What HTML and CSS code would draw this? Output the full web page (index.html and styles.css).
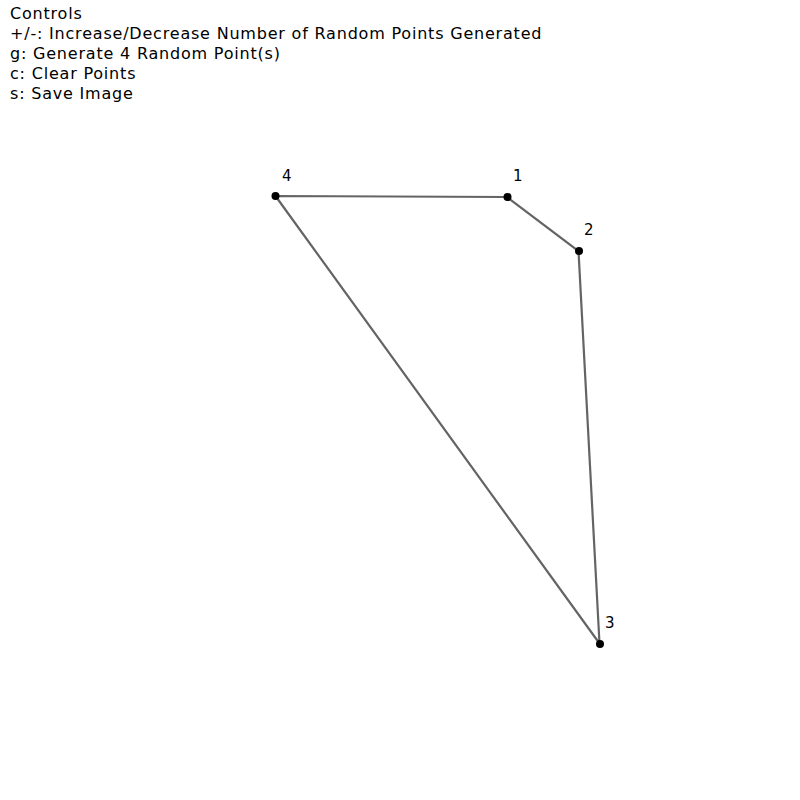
FILE: index.html
```html
<!DOCTYPE html>
<html lang="en">
<head>
    <meta charset="UTF-8">
    <title>Random Points</title>
    <link rel="stylesheet" href="styles.css">
</head>
<body>
    <div class="stage">
        <!-- Drawing surface: polygon through the generated points -->
        <svg class="canvas" width="800" height="800" viewBox="0 0 800 800">
            <polygon class="edges" points="507,197 578.5,251 599.5,643.5 275.5,196"/>
            <g class="dots">
                <circle cx="507.5" cy="197" r="4"/>
                <circle cx="579" cy="251" r="4"/>
                <circle cx="600" cy="644" r="4"/>
                <circle cx="275.5" cy="196" r="4"/>
            </g>
            <g class="labels">
                <text x="513" y="181">1</text>
                <text x="584" y="235">2</text>
                <text x="605" y="628">3</text>
                <text x="282" y="181">4</text>
            </g>
        </svg>

        <div class="controls">
            <div>Controls</div>
            <div>+/-: Increase/Decrease Number of Random Points Generated</div>
            <div>g: Generate 4 Random Point(s)</div>
            <div>c: Clear Points</div>
            <div>s: Save Image</div>
        </div>
    </div>
</body>
</html>
```

FILE: styles.css
```css
body {
    margin: 0;
    background: #ffffff;
    font-family: 'DejaVu Sans', 'Liberation Sans', sans-serif;
    color: #000000;
}
.stage {
    position: relative;
    width: 800px;
    height: 800px;
    overflow: hidden;
}
.canvas {
    position: absolute;
    top: 0;
    left: 0;
}
.controls {
    position: relative;
    padding: 4px 10px;
    font-size: 16px;
    line-height: 20px;
    letter-spacing: 0.8px;
}
.dots circle {
    fill: #000000;
}
.edges {
    fill: none;
    stroke: #646464;
    stroke-width: 2.2;
}
.labels text {
    font-family: 'DejaVu Sans', sans-serif;
    font-size: 15px;
    letter-spacing: 0.5px;
    fill: #000000;
}
```
